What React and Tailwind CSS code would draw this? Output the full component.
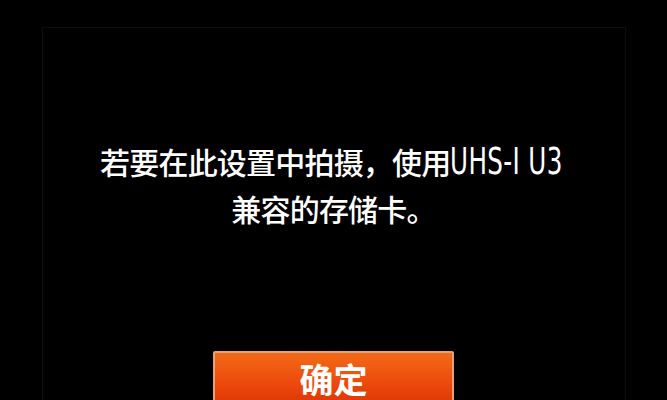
import React from 'react';

const cjk = { fontFamily: '"Noto Sans CJK SC", "Noto Sans", sans-serif' };

const App = () => {
    return (
        <div className="w-[667px] h-[400px] bg-black overflow-hidden flex flex-col items-center" style={cjk}>
            <div className="mt-[27px] w-[584px] h-[380px] border border-[#0d0d0d] border-b-0 flex flex-col items-center shrink-0">
                <div className="mt-[110px] text-white text-[30px] font-medium leading-[47px] text-center tracking-[-0.8px]">
                    <div className="whitespace-nowrap">
                        若要在此设置中拍摄，使用
                        <span className="inline-block align-top font-['DejaVu_Sans_Condensed'] font-normal text-[38px] leading-[47px] tracking-[0.5px] scale-x-[0.72] origin-left mr-[-40px]">UHS-I U3</span>
                    </div>
                    <div>兼容的存储卡。</div>
                </div>
                <button className="mt-[119px] w-[241px] h-[64px] shrink-0 rounded-[2px] border-2 border-[#e2a27c] bg-gradient-to-b from-[#f36a18] via-[#ec4a0c] to-[#d82c02] text-white text-[34px] font-bold leading-none pb-[16px] pt-[8px]">
                    确定
                </button>
            </div>
        </div>
    );
};

export default App;
